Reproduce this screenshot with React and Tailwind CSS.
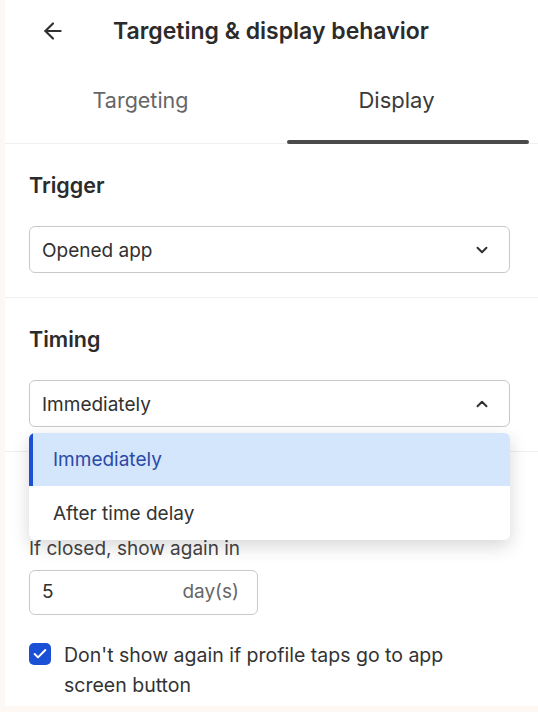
import { ArrowLeft, ChevronDown, ChevronUp, Check } from 'lucide-react'

const font = { fontFamily: 'Inter, "Noto Sans", sans-serif' }

function Select({ value, open }) {
  return (
    <div className="flex h-[47px] items-center justify-between rounded-md border border-[#c9c9c9] bg-white pl-[12px] pr-[18px] pt-[3px] text-[19px] text-[#303030]">
      <span>{value}</span>
      {open ? (
        <ChevronUp size={18} strokeWidth={2.6} className="-mt-[3px] text-[#303030]" />
      ) : (
        <ChevronDown size={18} strokeWidth={2.6} className="-mt-[3px] text-[#303030]" />
      )}
    </div>
  )
}

export default function App() {
  return (
    <div className="h-[712px] w-full bg-[#fdf8f3] pb-[6px] pl-[5px]" style={font}>
      <div className="relative h-full bg-white">
        {/* header */}
        <div className="flex h-[62px] items-center pl-[35px]">
          <ArrowLeft size={26} strokeWidth={2} className="text-[#303030]" />
          <h1 className="ml-[47px] text-[23px] font-semibold text-[#2b2b2b]">Targeting &amp; display behavior</h1>
        </div>

        {/* tabs */}
        <div className="flex h-[82px] border-b border-[#efefef]">
          <button className="flex w-[282px] items-center justify-center pb-[5px] pr-[11px] text-[21.5px] text-[#666]">Targeting</button>
          <button className="relative flex w-[242px] items-center justify-center pb-[5px] pr-[23px] text-[22px] text-[#3a3a3a]">
            Display
            <span className="absolute bottom-[-1px] left-0 right-0 h-[4px] rounded-full bg-[#4a4a4a]" />
          </button>
        </div>

        {/* trigger */}
        <div className="border-b border-[#efefef] pb-[24px] pl-[24px] pr-[28px] pt-[27px]">
          <h2 className="mb-[27px] text-[21.5px] font-semibold leading-[28px] text-[#2b2b2b]">Trigger</h2>
          <Select value="Opened app" />
        </div>

        {/* timing */}
        <div className="relative border-b border-[#efefef] pb-[24px] pl-[24px] pr-[28px] pt-[27px]">
          <h2 className="mb-[27px] text-[21.5px] font-semibold leading-[28px] text-[#2b2b2b]">Timing</h2>
          <Select value="Immediately" open />

          <div className="absolute left-[24px] right-[28px] top-[135px] z-10 overflow-hidden rounded-md bg-white text-[19px] shadow-[0_6px_18px_rgba(0,0,0,0.16)]">
            <div className="flex h-[53px] items-center border-l-[4px] border-[#1a4fd6] bg-[#d3e6fb] pl-[20px] pt-[2px] text-[#2c4aa6]">
              Immediately
            </div>
            <div className="flex h-[54px] items-center pl-[24px] pt-[2px] text-[#333]">After time delay</div>
          </div>
        </div>

        {/* frequency */}
        <div className="px-[24px] pt-[85px]">
          <p className="text-[19px] leading-[24px] text-[#444]">If closed, show again in</p>
          <div className="mt-[9px] flex h-[45px] w-[229px] items-center justify-between rounded-md border border-[#c9c9c9] pl-[12px] pr-[18px] text-[19px]">
            <span className="text-[#303030]">5</span>
            <span className="text-[#666]">day(s)</span>
          </div>

          <label className="mt-[28px] flex items-start gap-[13px]">
            <span className="flex h-[22px] w-[22px] shrink-0 items-center justify-center rounded-[5px] bg-[#1a4fd6]">
              <Check size={16} strokeWidth={3} className="text-white" />
            </span>
            <span className="-mt-[3px] text-[19.5px] leading-[30px] text-[#333]">
              Don't show again if profile taps go to app
              <br />
              screen button
            </span>
          </label>
        </div>
      </div>
    </div>
  )
}
